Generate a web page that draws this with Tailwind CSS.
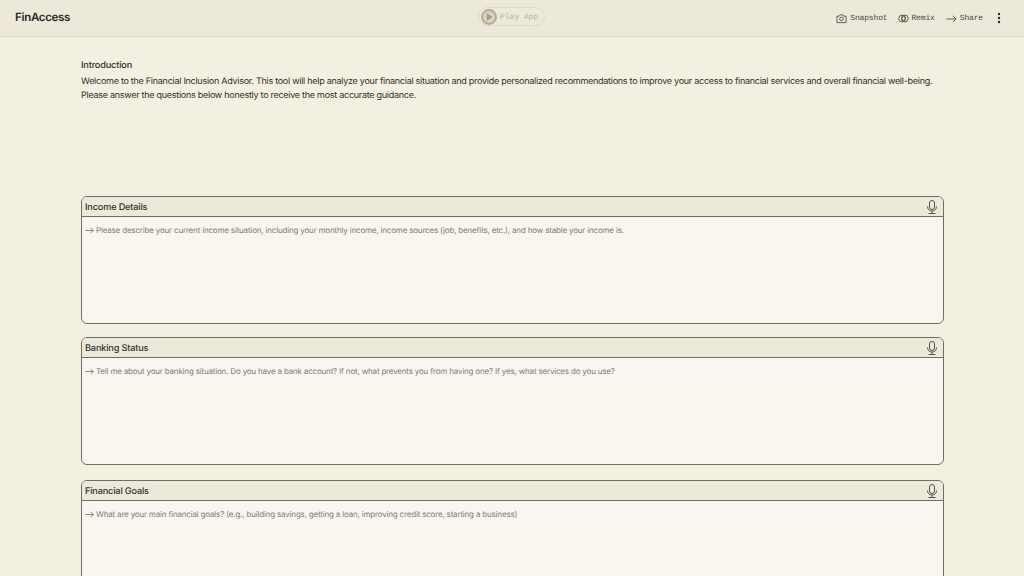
<!DOCTYPE html>
<html lang="en">
<head>
    <meta charset="UTF-8">
    <title>FinAccess</title>
    <script src="https://cdn.jsdelivr.net/npm/@tailwindcss/browser@4"></script>
</head>
<body class="bg-[#f3f0e2] h-[576px] overflow-hidden font-['Inter',sans-serif] text-[#1f1f1b] [text-rendering:geometricPrecision]">
    <!-- Header -->
    <header class="h-[37px] bg-[#ede9da] border-b border-[#dcd9cb] flex items-center justify-between pl-[15px] pr-[23px] relative">
        <div class="text-[11.5px] font-semibold tracking-[-0.3px] text-[#2a2a25]">FinAccess</div>
        <div class="absolute left-[478px] top-[7px] w-[67px] h-[19px] rounded-full border border-[#dfdbca] flex items-center pl-[2px] gap-[3px]">
            <svg width="16" height="16" viewBox="0 0 16 16"><circle cx="8" cy="8" r="7" fill="#d8d3c0" stroke="#b0a992" stroke-width="1.8"/><path d="M5.8 4.2 11.6 8 5.8 11.8Z" fill="#a39c84"/></svg>
            <span class="font-['Liberation_Mono',monospace] text-[8px] text-[#b5ae99] pt-[2px]">Play App</span>
        </div>
        <div class="flex items-center font-['Liberation_Mono',monospace] text-[8px] tracking-[-0.15px] text-[#45443c]">
            <svg class="mr-[3px]" width="11" height="11" viewBox="0 0 24 24" fill="none" stroke="#45443c" stroke-width="1.8"><path d="M2 7h5l2-3h6l2 3h5v14H2z"/><circle cx="12" cy="13" r="4"/></svg>
            <span class="pt-[1px]">Snapshot</span>
            <svg class="ml-[11px] mr-[2px]" width="11" height="11" viewBox="0 0 24 24" fill="none" stroke="#45443c" stroke-width="1.8"><circle cx="9" cy="12" r="7.5"/><circle cx="15" cy="12" r="7.5"/><circle cx="12" cy="12" r="4"/></svg>
            <span class="pt-[1px]">Remix</span>
            <svg class="ml-[11px] mr-[3px]" width="11" height="11" viewBox="0 0 24 24" fill="none" stroke="#45443c" stroke-width="1.8"><path d="M1 13h21M15 6l7 7-7 7"/></svg>
            <span class="pt-[1px]">Share</span>
            <svg class="ml-[14px]" width="4" height="12" viewBox="0 0 4 12" fill="#2b2b26"><circle cx="2" cy="2" r="1.2"/><circle cx="2" cy="6" r="1.2"/><circle cx="2" cy="10" r="1.2"/></svg>
        </div>
    </header>

    <main class="pl-[81px] pr-[80px]">
        <!-- Introduction -->
        <section class="pt-[22px] h-[159px] leading-[14px] text-[#2f2f29]">
            <h2 class="font-medium mb-[2px] text-[9.2px] tracking-[-0.17px]">Introduction</h2>
            <p class="text-[9px] tracking-[-0.27px]">Welcome to the Financial Inclusion Advisor. This tool will help analyze your financial situation and provide personalized recommendations to improve your access to financial services and overall financial well-being. Please answer the questions below honestly to receive the most accurate guidance.</p>
        </section>

        <!-- Income Details -->
        <section class="h-[128px] mb-[13px] border border-[#6f6e63] rounded-[6px] bg-[#f8f6ef] overflow-hidden">
            <div class="h-[20px] bg-[#ede9da] border-b border-[#6f6e63] flex items-center justify-between pl-[3px] pr-[5px]">
                <span class="text-[9.2px] tracking-[-0.18px] font-medium text-[#33332d] pt-[2px]">Income Details</span>
                <svg width="12" height="14" viewBox="0 0 12 14" fill="none" stroke="#55544a" stroke-width="1"><rect x="3.5" y="0.5" width="5" height="9" rx="2.5"/><path d="M1.5 6.5c0 6 9 6 9 0M6 11v2M2.5 13.5h7"/></svg>
            </div>
            <div class="flex items-center gap-[2px] pl-[3px] pt-[7px] text-[8px] tracking-[-0.18px] text-[#7d7c70]">
                <svg width="9" height="9" viewBox="0 0 24 24" fill="none" stroke="#55544a" stroke-width="1.8"><path d="M1 12h21M15 5l7 7-7 7"/></svg>
                <span>Please describe your current income situation, including your monthly income, income sources (job, benefits, etc.), and how stable your income is.</span>
            </div>
        </section>

        <!-- Banking Status -->
        <section class="h-[128px] mb-[15px] border border-[#6f6e63] rounded-[6px] bg-[#f8f6ef] overflow-hidden">
            <div class="h-[20px] bg-[#ede9da] border-b border-[#6f6e63] flex items-center justify-between pl-[3px] pr-[5px]">
                <span class="text-[9.2px] tracking-[-0.18px] font-medium text-[#33332d] pt-[2px]">Banking Status</span>
                <svg width="12" height="14" viewBox="0 0 12 14" fill="none" stroke="#55544a" stroke-width="1"><rect x="3.5" y="0.5" width="5" height="9" rx="2.5"/><path d="M1.5 6.5c0 6 9 6 9 0M6 11v2M2.5 13.5h7"/></svg>
            </div>
            <div class="flex items-center gap-[2px] pl-[3px] pt-[7px] text-[8px] tracking-[-0.18px] text-[#7d7c70]">
                <svg width="9" height="9" viewBox="0 0 24 24" fill="none" stroke="#55544a" stroke-width="1.8"><path d="M1 12h21M15 5l7 7-7 7"/></svg>
                <span>Tell me about your banking situation. Do you have a bank account? If not, what prevents you from having one? If yes, what services do you use?</span>
            </div>
        </section>

        <!-- Financial Goals -->
        <section class="h-[128px] border border-[#6f6e63] rounded-[6px] bg-[#f8f6ef] overflow-hidden">
            <div class="h-[20px] bg-[#ede9da] border-b border-[#6f6e63] flex items-center justify-between pl-[3px] pr-[5px]">
                <span class="text-[9.2px] tracking-[-0.18px] font-medium text-[#33332d] pt-[2px]">Financial Goals</span>
                <svg width="12" height="14" viewBox="0 0 12 14" fill="none" stroke="#55544a" stroke-width="1"><rect x="3.5" y="0.5" width="5" height="9" rx="2.5"/><path d="M1.5 6.5c0 6 9 6 9 0M6 11v2M2.5 13.5h7"/></svg>
            </div>
            <div class="flex items-center gap-[2px] pl-[3px] pt-[7px] text-[8px] tracking-[-0.18px] text-[#7d7c70]">
                <svg width="9" height="9" viewBox="0 0 24 24" fill="none" stroke="#55544a" stroke-width="1.8"><path d="M1 12h21M15 5l7 7-7 7"/></svg>
                <span>What are your main financial goals? (e.g., building savings, getting a loan, improving credit score, starting a business)</span>
            </div>
        </section>
    </main>
</body>
</html>
